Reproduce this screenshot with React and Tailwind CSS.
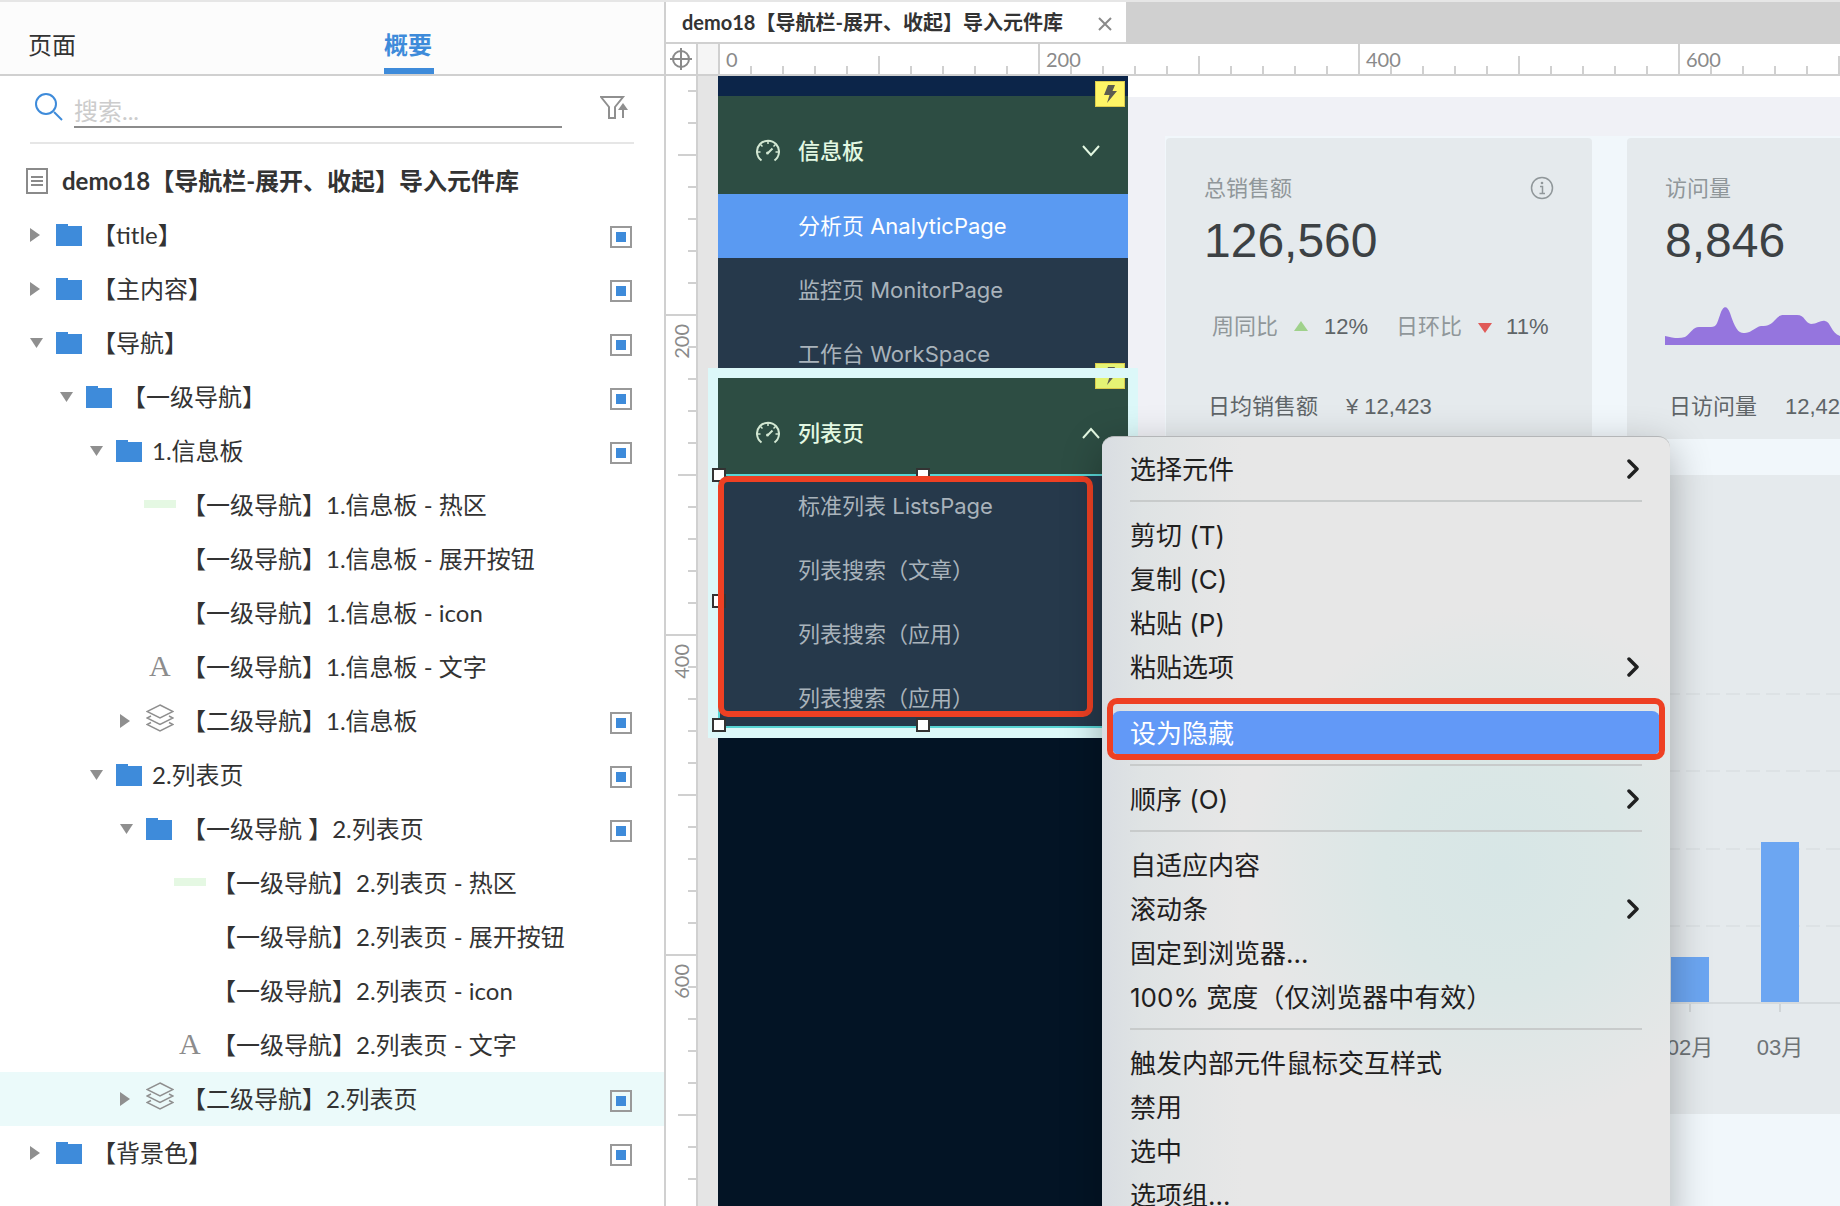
import React, { useState } from "react";

const treeRows = [
  { level: 0, open: false, icon: "folder", label: "【title】", check: true },
  { level: 0, open: false, icon: "folder", label: "【主内容】", check: true },
  { level: 0, open: true, icon: "folder", label: "【导航】", check: true },
  { level: 1, open: true, icon: "folder", label: "【一级导航】", check: true },
  { level: 2, open: true, icon: "folder", label: "1.信息板", check: true },
  { level: 3, icon: "hotspot", label: "【一级导航】1.信息板 - 热区" },
  { level: 3, label: "【一级导航】1.信息板 - 展开按钮" },
  { level: 3, label: "【一级导航】1.信息板 - icon" },
  { level: 3, icon: "text", label: "【一级导航】1.信息板 - 文字" },
  { level: 3, open: false, icon: "layers", label: "【二级导航】1.信息板", check: true },
  { level: 2, open: true, icon: "folder", label: "2.列表页", check: true },
  { level: 3, open: true, icon: "folder", label: "【一级导航 】2.列表页", check: true },
  { level: 4, icon: "hotspot", label: "【一级导航】2.列表页 - 热区" },
  { level: 4, label: "【一级导航】2.列表页 - 展开按钮" },
  { level: 4, label: "【一级导航】2.列表页 - icon" },
  { level: 4, icon: "text", label: "【一级导航】2.列表页 - 文字" },
  { level: 3, open: false, icon: "layers", label: "【二级导航】2.列表页", check: true, selected: true },
  { level: 0, open: false, icon: "folder", label: "【背景色】", check: true },
];

const menuItems = [
  { label: "选择元件", sub: true },
  "-",
  { label: "剪切 (T)" },
  { label: "复制 (C)" },
  { label: "粘贴 (P)" },
  { label: "粘贴选项", sub: true },
  "-",
  { label: "设为隐藏", active: true },
  "-",
  { label: "顺序 (O)", sub: true },
  "-",
  { label: "自适应内容" },
  { label: "滚动条", sub: true },
  { label: "固定到浏览器..." },
  { label: "100% 宽度（仅浏览器中有效）" },
  "-",
  { label: "触发内部元件鼠标交互样式" },
  { label: "禁用" },
  { label: "选中" },
  { label: "选项组..." },
];

function Arrow({ open }) {
  return open ? (
    <svg width="13" height="10" viewBox="0 0 13 10">
      <path d="M0 0H13L6.500 10Z" fill="#8f8f8f" />
    </svg>
  ) : (
    <svg width="10" height="14" viewBox="0 0 10 14">
      <path d="M0 0L10 7L0 14Z" fill="#8f8f8f" />
    </svg>
  );
}

function TreeIcon({ type }) {
  if (type === "folder") {
    return (
      <svg width="26" height="22" viewBox="0 0 26 22">
        <path d="M0 0H12V2H26V22H0Z" fill="#3e8bda" />
      </svg>
    );
  }
  if (type === "hotspot") return <span className="mb-0.5 -ml-0.5 h-2 w-8 bg-[#e5f8e3]" />;
  if (type === "text") return <span className="pb-0.5 pl-[3px] font-['Liberation_Serif',serif] text-[30px] leading-none text-[#8c8c8c]">A</span>;
  if (type === "layers") {
    return (
      <svg className="mb-1.5" width="28" height="28" viewBox="0 0 28 28" fill="none" stroke="#8f8f8f" strokeWidth="1.500">
        <path d="M14 1L27 7.500L14 14L1 7.500Z" />
        <path d="M5 12L1 14L14 20.500L27 14L23 12" />
        <path d="M5 18.500L1 20.500L14 27L27 20.500L23 18.500" />
      </svg>
    );
  }
  return null;
}

function TreeRow({ row }) {
  return (
    <li className={`flex h-[54px] items-center pr-8 ${row.selected ? "bg-[#ebfafa]" : ""}`} style={{ paddingLeft: 30 + row.level * 30 }}>
      <span className="flex w-[26px] shrink-0">
        {row.open !== undefined && (
          <button type="button" aria-label="toggle">
            <Arrow open={row.open} />
          </button>
        )}
      </span>
      <span className="flex w-9 shrink-0 items-center">
        <TreeIcon type={row.icon} />
      </span>
      <span className="whitespace-pre">{row.label}</span>
      {row.check && <input type="checkbox" defaultChecked aria-label={row.label} className="mt-1 ml-auto size-[22px] appearance-none border-2 border-[#999] bg-white bg-clip-content p-1 checked:bg-[#3e8bda]" />}
    </li>
  );
}

function OutlinePanel() {
  const [search, setSearch] = useState("");
  return (
    <aside className="w-[666px] shrink-0 border-r-2 border-[#d0d0d0] bg-white text-2xl text-[#333]">
      <div className="flex h-[74px] border-b-2 border-[#d0d0d0] bg-[#fcfcfc] pl-7">
        <button type="button" className="w-[356px] pt-3.5 text-left">
          页面
        </button>
        <button type="button" className="w-[50px] border-b-6 border-[#3e8bda] pt-5 text-left font-bold text-[#3e8bda]">
          概要
        </button>
      </div>

      <div className="mx-[30px] flex h-[68px] items-start border-b-2 border-[#e6e6e6] pl-[5px]">
        <svg className="mt-[17px] mr-[11px] shrink-0" width="28" height="28" viewBox="0 0 28 28" fill="none" stroke="#3e8bda" strokeWidth="2">
          <circle cx="11" cy="11" r="10" />
          <path d="M19 19L27 27" />
        </svg>
        <input type="text" aria-label="搜索" placeholder="搜索..." value={search} onChange={(e) => setSearch(e.target.value)} className="mt-[18px] h-[34px] w-[488px] border-b-2 border-[#8c8c8c] outline-none placeholder:text-[#ccc]" />
        <button type="button" aria-label="filter" className="mt-5 ml-auto">
          <svg width="34" height="24" viewBox="0 0 34 24" fill="none" stroke="#8f8f8f" strokeWidth="2">
            <path d="M1 1H23L15 11V22H9V11Z" />
            <path d="M23 22V11" />
            <path d="M23 7L28 14H18Z" fill="#8f8f8f" stroke="none" />
          </svg>
        </button>
      </div>

      <div className="mt-2.5 flex h-[54px] items-center gap-3.5 pl-[26px] font-bold">
        <svg width="22" height="26" viewBox="0 0 22 26" fill="none" stroke="#8a8a8a" strokeWidth="2">
          <path d="M1 1H21V25H1Z" />
          <path d="M5 9H17M5 13H17M5 17H17" />
        </svg>
        <h1>demo18【导航栏-展开、收起】导入元件库</h1>
      </div>
      <ul>
        {treeRows.map((row, index) => (
          <TreeRow key={index} row={row} />
        ))}
      </ul>
    </aside>
  );
}

// one tick every 20 units, 32px apart
function tickLength(units) {
  if (units % 200 === 0) return "major";
  if (units % 100 === 0) return "mid";
  return "minor";
}

const hTick = { major: "h-[30px]", mid: "h-[18px]", minor: "h-2" };
const vTick = { major: "w-[30px]", mid: "w-[18px]", minor: "w-2" };

function HorizontalRuler() {
  const ticks = Array.from({ length: 38 }, (_, i) => i * 20);
  return (
    <div className="flex min-w-0 flex-1 overflow-hidden">
      <div className="w-5 shrink-0 bg-[#f5f5f5]" />
      {ticks.map((units) => (
        <div key={units} className="flex w-8 shrink-0 items-end">
          <div className={`w-0.5 shrink-0 bg-[#d0d0d0] ${hTick[tickLength(units)]}`} />
          {units % 200 === 0 && <span className="pl-1.5 text-xl leading-[30px]">{units}</span>}
        </div>
      ))}
    </div>
  );
}

function VerticalRuler() {
  const ticks = Array.from({ length: 36 }, (_, i) => 60 + i * 20);
  return (
    <div className="w-8 shrink-0 overflow-hidden border-r-2 border-[#d0d0d0] bg-white pt-3.5">
      {ticks.map((units) => (
        <div key={units} className="flex h-8 flex-col items-end">
          <div className={`h-0.5 shrink-0 bg-[#d0d0d0] ${vTick[tickLength(units)]}`} />
          {units % 200 === 0 && <span className="rotate-180 pb-2 text-xl leading-[30px] [writing-mode:vertical-rl]">{units}</span>}
        </div>
      ))}
    </div>
  );
}

function GaugeIcon() {
  return (
    <svg width="24" height="24" viewBox="0 0 24 24" fill="none" stroke="#d3e8d3" strokeWidth="2">
      <path d="M5.500 21.500A11 11 0 1 1 18.500 21.500" />
      <path d="M12 2V5M4.500 5.500L6.500 7.500M19.500 5.500L17.500 7.500M1.500 13H4.500M22.500 13H19.500" strokeWidth="1.500" />
      <path d="M12 14L16.500 9.500" />
      <circle cx="11.500" cy="14" r="1.500" fill="#d3e8d3" stroke="none" />
    </svg>
  );
}

function NavHeader({ label, open, badge }) {
  return (
    <div className="relative flex h-24 items-center bg-[#2d4d43] pt-3.5 pr-7 pl-[38px]">
      <GaugeIcon />
      <span className="pl-[18px] font-medium text-[#e3f8e2]">{label}</span>
      <svg className="ml-auto" width="18" height="12" viewBox="0 0 18 12" fill="none" stroke="#e3f8e2" strokeWidth="2">
        <path d={open ? "M1 11L9 2L17 11" : "M1 1L9 10L17 1"} />
      </svg>
      <span className={`absolute -top-[15px] right-[3px] flex h-[26px] w-[30px] items-center justify-center border border-[#dccb4c] ${badge}`}>
        <svg width="14" height="18" viewBox="0 0 14 18">
          <path d="M5 0H12L9.500 6H14L4 18L6.500 10H1Z" fill="#5c5c50" />
        </svg>
      </span>
    </div>
  );
}

function NavItem({ label, active }) {
  return (
    <a href="#" className={`flex h-16 shrink-0 items-center pl-20 ${active ? "bg-[#5a9af2] text-white" : "text-[#a9b3bb]"}`}>
      {label}
    </a>
  );
}

function Handle({ place }) {
  return <span className={`absolute size-3.5 border-2 border-[#333] bg-white ${place}`} />;
}

function NavColumn() {
  return (
    <nav className="flex w-[410px] shrink-0 flex-col bg-[#031425]">
      <div className="h-5 shrink-0 bg-[#0c2549]" />
      <NavHeader label="信息板" badge="bg-[#fff566]" />
      <div className="h-[186px] overflow-hidden border-t-2 border-[#2d4d43] bg-[#26394b]">
        <NavItem label="分析页 AnalyticPage" active />
        <NavItem label="监控页 MonitorPage" />
        <NavItem label="工作台 WorkSpace" />
      </div>
      <div className="relative">
        <NavHeader label="列表页" open badge="bg-[#e5f475]" />
        <div className="pointer-events-none absolute -inset-2.5 border-10 border-[#dcf8f9]" />
        <div className="relative h-[254px] bg-[#26394b]">
          <div className="h-[254px] overflow-hidden">
            <NavItem label="标准列表 ListsPage" />
            <NavItem label="列表搜索（文章）" />
            <NavItem label="列表搜索（应用）" />
            <NavItem label="列表搜索（应用）" />
          </div>
          <div className="absolute inset-0 border-2 border-[#58d5d5]" />
          <Handle place="-top-1.5 -left-1.5" />
          <Handle place="-top-1.5 left-[198px]" />
          <Handle place="top-[120px] -left-1.5" />
          <Handle place="-bottom-1 -left-1.5" />
          <Handle place="-bottom-1 left-[198px]" />
          <div className="absolute top-0.5 right-[35px] bottom-[11px] left-0 rounded-[10px] border-6 border-[#ee4023]" />
        </div>
      </div>
    </nav>
  );
}

function StatCard({ title, value, children, footLabel, footValue }) {
  return (
    <section className="flex h-[301px] w-[426px] shrink-0 flex-col rounded bg-[#e5eaed] px-[38px] pt-[34px] text-[#5f6568]">
      <div className="flex h-8 items-center justify-between text-[#90979a]">
        <h2>{title}</h2>
        <svg width="24" height="24" viewBox="0 0 24 24" fill="none" stroke="#90979a" strokeWidth="1.500">
          <circle cx="12" cy="12" r="10.500" />
          <path d="M10 10.500H12.500V17M9.500 17.500H15" />
          <circle cx="12" cy="7" r="1.300" fill="#90979a" stroke="none" />
        </svg>
      </div>
      <p className="mt-2 text-5xl leading-[58px] text-[#3c4144]">{value}</p>
      <div className="mt-9 flex h-10 items-center">{children}</div>
      <p className="mt-[42px] flex gap-7 pl-1 leading-[38px]">
        <span>{footLabel}</span>
        <span>{footValue}</span>
      </p>
    </section>
  );
}

function BarChart() {
  const months = [
    { label: "01月", x: 434, h: 90 },
    { label: "02月", x: 524, h: 45 },
    { label: "03月", x: 614, h: 160 },
  ];
  return (
    <svg width="900" height="639" viewBox="0 0 900 639">
      {[219, 296, 374, 451].map((y) => (
        <path key={y} d={`M60 ${y}H900`} stroke="#dde2e5" strokeWidth="2" strokeDasharray="14 6" />
      ))}
      <path d="M60 528H900" stroke="#d5dadd" strokeWidth="2" />
      {months.map((m) => (
        <g key={m.label}>
          <rect x={m.x - 19} y={527 - m.h} width="38" height={m.h} fill="#6ca6f2" />
          <path d={`M${m.x} 529V537`} stroke="#d0d5d8" strokeWidth="2" />
          <text x={m.x} y="580" textAnchor="middle" fontSize="22" fill="#6e7376">
            {m.label}
          </text>
        </g>
      ))}
    </svg>
  );
}

function Dashboard() {
  return (
    <div className="min-w-0 flex-1 overflow-hidden bg-[#f0f1f6] font-['Liberation_Sans','Noto_Sans_CJK_SC',sans-serif] text-[22px]">
      <div className="h-[21px] bg-white" />
      <div className="mt-[39px] ml-[37px] h-full border-t-2 border-l border-[#f1f7fb] bg-[#f1f7fb]">
        <div className="flex gap-[35px]">
          <StatCard title="总销售额" value="126,560" footLabel="日均销售额" footValue="¥ 12,423">
            <span className="pl-2 text-[#90979a]">周同比</span>
            <svg className="mx-4" width="14" height="10" viewBox="0 0 14 10">
              <path d="M7 0L14 10H0Z" fill="#9fd18b" />
            </svg>
            <span>12%</span>
            <span className="pl-7 text-[#90979a]">日环比</span>
            <svg className="mt-1 mr-3.5 ml-4" width="14" height="10" viewBox="0 0 14 10">
              <path d="M0 0H14L7 10Z" fill="#e05a58" />
            </svg>
            <span>11%</span>
          </StatCard>
          <StatCard title="访问量" value="8,846" footLabel="日访问量" footValue="12,423">
            <svg className="shrink-0" width="350" height="38" viewBox="0 0 350 38">
              <path d="M0 38V29C8 31 14 32 20 30C26 26 28 20 34 20H46C52 20 52 16 55 8C58 -2 62 -2 65 6C70 22 74 27 80 26C88 25 90 20 96 19C104 19 106 17 110 13C114 9 115 8 119 8H132C140 8 140 16 146 17C152 17 156 13 160 14C166 15 166 26 175 29C200 34 230 10 260 20C290 30 320 20 350 28V38Z" fill="#9575de" />
            </svg>
          </StatCard>
        </div>
        <section className="mt-9 w-[1200px] bg-[#e5eaed]">
          <BarChart />
        </section>
      </div>
    </div>
  );
}

function ContextMenu() {
  return (
    <div
      role="menu"
      className="absolute top-[434px] left-[1102px] w-[568px] rounded-t-xl border-t border-[#b4b6b8] bg-[#e7e7e7] bg-[radial-gradient(circle_at_400px_430px,#d7e6e6_0,#dbe7e6_120px,#e7e7e700_260px),linear-gradient(to_right,#d9dde2_0,#dfe3e4_40px,#e7e7e7_140px)] pt-2.5 pb-3 font-[Inter,'Noto_Sans_CJK_SC',sans-serif] text-[26px] text-[#1f2020] shadow-[0_12px_40px_rgba(0,0,0,0.3)]"
    >
      {menuItems.map((item, index) =>
        item === "-" ? (
          <div key={index} role="separator" className="mx-7 h-[22px] pt-[9px]">
            <div className="h-0.5 bg-[#c8cbcb]" />
          </div>
        ) : (
          <button type="button" role="menuitem" key={index} className={`relative mx-2.5 flex h-11 w-[548px] items-center justify-between rounded-lg pr-5 pl-[18px] ${item.active ? "bg-[#6299f7] text-white" : ""}`}>
            {item.label}
            {item.sub && (
              <svg width="13" height="20" viewBox="0 0 13 20" fill="none" stroke="#1f2020" strokeWidth="3.500" strokeLinecap="round" strokeLinejoin="round">
                <path d="M2 2L10 10L2 18" />
              </svg>
            )}
            {item.active && <span className="absolute -inset-x-[5px] -top-[13px] -bottom-[5px] rounded-[10px] border-6 border-[#ee4023]" />}
          </button>
        )
      )}
    </div>
  );
}

export default function App() {
  return (
    <div className="relative flex h-screen overflow-hidden border-t-2 border-[#e6e6e6] bg-white font-[Lato,'Noto_Sans_CJK_SC',sans-serif]">
      <OutlinePanel />
      <main className="flex min-w-0 flex-1 flex-col text-[#8a8a8a]">
        <div className="flex h-[42px] shrink-0 border-b-2 border-[#d0d0d0] bg-[#d0d0d0]">
          <div className="flex w-[460px] items-center justify-between bg-white pr-3.5 pl-4">
            <span className="text-xl leading-10 font-bold text-[#333]">demo18【导航栏-展开、收起】导入元件库</span>
            <button type="button" aria-label="close" className="pt-1">
              <svg width="14" height="14" viewBox="0 0 14 14" stroke="#8a8a8a" strokeWidth="2">
                <path d="M1 1L13 13M13 1L1 13" />
              </svg>
            </button>
          </div>
        </div>
        <div className="flex h-8 shrink-0 border-b-2 border-[#d0d0d0]">
          <div className="flex w-8 shrink-0 items-center justify-center border-r-2 border-[#d0d0d0]">
            <svg width="22" height="22" viewBox="0 0 22 22" fill="none" stroke="#8a8a8a" strokeWidth="2">
              <circle cx="11" cy="11" r="8" />
              <path d="M11 0V22M0 11H22" />
            </svg>
          </div>
          <HorizontalRuler />
        </div>
        <div className="flex min-h-0 flex-1">
          <VerticalRuler />
          <div className="flex min-w-0 flex-1 bg-[#e5e5e5] pl-5 text-[22px]">
            <div className="z-10 flex font-[Inter,'Noto_Sans_CJK_SC',sans-serif]">
              <NavColumn />
            </div>
            <Dashboard />
          </div>
        </div>
      </main>
      <div className="z-20">
        <ContextMenu />
      </div>
    </div>
  );
}
